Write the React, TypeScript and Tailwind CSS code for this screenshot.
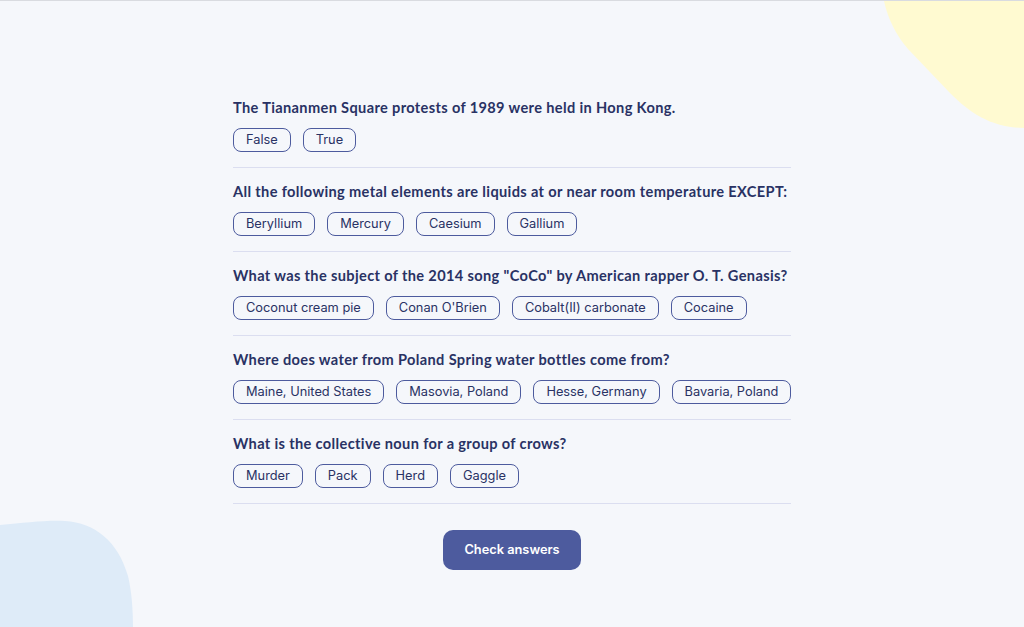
import React from 'react'

type Question = {
  text: string
  answers: string[]
}

const questions: Question[] = [
  {
    text: 'The Tiananmen Square protests of 1989 were held in Hong Kong.',
    answers: ['False', 'True'],
  },
  {
    text: 'All the following metal elements are liquids at or near room temperature EXCEPT:',
    answers: ['Beryllium', 'Mercury', 'Caesium', 'Gallium'],
  },
  {
    text: 'What was the subject of the 2014 song "CoCo" by American rapper O. T. Genasis?',
    answers: ['Coconut cream pie', "Conan O'Brien", 'Cobalt(II) carbonate', 'Cocaine'],
  },
  {
    text: 'Where does water from Poland Spring water bottles come from?',
    answers: ['Maine, United States', 'Masovia, Poland', 'Hesse, Germany', 'Bavaria, Poland'],
  },
  {
    text: 'What is the collective noun for a group of crows?',
    answers: ['Murder', 'Pack', 'Herd', 'Gaggle'],
  },
]

const Blobs = () => (
  <svg
    className="absolute inset-0 pointer-events-none"
    width="1024"
    height="627"
    viewBox="0 0 1024 627"
  >
    <path
      d="M884,0 L1024,0 L1024,127 C992,126 972,114 950,92 L908,48 C896,34 888,18 884,0 Z"
      fill="#FFFAD1"
    />
    <path
      d="M0,524 C25,522 45,519 65,520 C95,522 118,540 128,575 C132,592 133,610 133,627 L0,627 Z"
      fill="#DEEBF8"
    />
  </svg>
)

const App = () => {
  return (
    <div className="relative w-full h-[627px] overflow-hidden bg-[#F5F7FB] border-t border-[#d9dbe0]">
      <Blobs />
      <div className="relative flex flex-col items-center pt-[98px]">
        <div className="w-[558px] flex flex-col">
          {questions.map((q, i) => (
            <div key={i} className="flex flex-col pt-[1px] border-b border-[#DBDEF0] pb-[15px] mb-[15px] last:mb-[14px]">
              <h2 className="whitespace-nowrap text-[14.6px] leading-[16px] font-bold text-[#293264] tracking-[0.35px] font-['Lato',sans-serif]">
                {q.text}
              </h2>
              <div className="flex gap-[12px] mt-[12px]">
                {q.answers.map((a) => (
                  <button
                    key={a}
                    className="shrink-0 whitespace-nowrap h-[24px] px-[12px] rounded-[8px] border border-[#4D5B9E] text-[12.8px] text-[#293264] font-['Inter',sans-serif] leading-none"
                  >
                    {a}
                  </button>
                ))}
              </div>
            </div>
          ))}
        </div>
        <button className="mt-[12px] w-[138px] h-[40px] rounded-[10px] bg-[#4D5B9E] text-white text-[12.8px] font-semibold font-['Inter',sans-serif]">
          Check answers
        </button>
      </div>
    </div>
  )
}

export default App
